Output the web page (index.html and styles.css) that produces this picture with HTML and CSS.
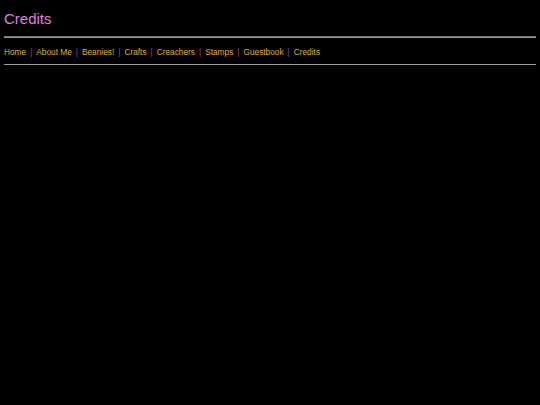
FILE: index.html
```html
<!DOCTYPE html>
<html>
<head>
<meta charset="utf-8">
<title>Credits</title>
<link rel="stylesheet" href="styles.css">
</head>
<body>
<h1 class="title">Credits</h1>
<hr class="rule">
<nav class="nav">
<a href="#">Home</a><span class="sep">|</span><a href="#">About Me</a><span class="sep">|</span><a href="#">Beanies!</a><span class="sep">|</span><a href="#">Crafts</a><span class="sep">|</span><a href="#">Creachers</a><span class="sep">|</span><a href="#">Stamps</a><span class="sep">|</span><a href="#">Guestbook</a><span class="sep">|</span><a href="#">Credits</a>
</nav>
<hr class="rule rule-bottom">
</body>
</html>
```
FILE: styles.css
```css
html, body {
  background: #000;
}
body {
  margin: 0 4px;
  font-family: "Comic Sans MS", "Liberation Sans", sans-serif;
}
.title {
  margin: 0;
  padding-top: 11px;
  height: 25px;
  font-size: 15px;
  line-height: 16px;
  font-weight: normal;
  color: #e07ee0;
}
.rule {
  margin: 0;
  height: 0;
  border: 0;
  border-top: 1px solid #707070;
  border-bottom: 1px solid #9a9a9a;
}
.nav {
  height: 26px;
  display: flex;
  align-items: center;
  font-size: 8.3px;
  padding-top: 1px;
  box-sizing: border-box;
}
.nav a {
  color: #e0b030;
  text-decoration: none;
}
.sep {
  color: #9848a8;
  margin: 0 4px;
}
.rule-bottom {
  border-top-color: #a0a0a0;
  border-bottom: 0;
}
```
